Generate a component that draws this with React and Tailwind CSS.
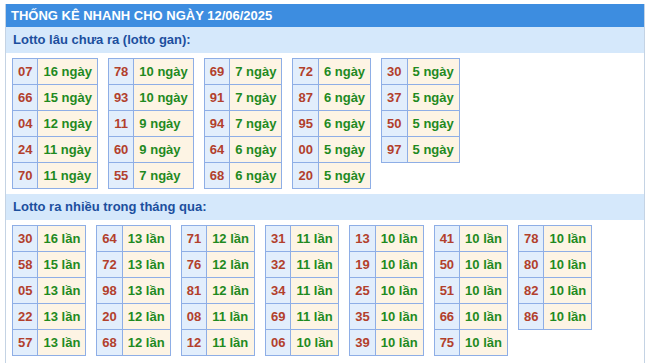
const gan = [
  [['07', '16 ngày'], ['66', '15 ngày'], ['04', '12 ngày'], ['24', '11 ngày'], ['70', '11 ngày']],
  [['78', '10 ngày'], ['93', '10 ngày'], ['11', '9 ngày'], ['60', '9 ngày'], ['55', '7 ngày']],
  [['69', '7 ngày'], ['91', '7 ngày'], ['94', '7 ngày'], ['64', '6 ngày'], ['68', '6 ngày']],
  [['72', '6 ngày'], ['87', '6 ngày'], ['95', '6 ngày'], ['00', '5 ngày'], ['20', '5 ngày']],
  [['30', '5 ngày'], ['37', '5 ngày'], ['50', '5 ngày'], ['97', '5 ngày']],
]

const nhieu = [
  [['30', '16 lần'], ['58', '15 lần'], ['05', '13 lần'], ['22', '13 lần'], ['57', '13 lần']],
  [['64', '13 lần'], ['72', '13 lần'], ['98', '13 lần'], ['20', '12 lần'], ['68', '12 lần']],
  [['71', '12 lần'], ['76', '12 lần'], ['81', '12 lần'], ['08', '11 lần'], ['12', '11 lần']],
  [['31', '11 lần'], ['32', '11 lần'], ['34', '11 lần'], ['69', '11 lần'], ['06', '10 lần']],
  [['13', '10 lần'], ['19', '10 lần'], ['25', '10 lần'], ['35', '10 lần'], ['39', '10 lần']],
  [['41', '10 lần'], ['50', '10 lần'], ['51', '10 lần'], ['66', '10 lần'], ['75', '10 lần']],
  [['78', '10 lần'], ['80', '10 lần'], ['82', '10 lần'], ['86', '10 lần']],
]

function LotoTable({ rows }) {
  return (
    <table className="border-collapse border border-[#8eaee6] self-start">
      <tbody>
        {rows.map(([so, val]) => (
          <tr key={so} className="h-[26px]">
            <td className="border border-[#8eaee6] bg-[#e2eefc] px-[5px] text-[#b2402c] font-bold text-center">{so}</td>
            <td className="border border-[#8eaee6] bg-[#fdf4e4] px-[5px] text-[#1f8a1f] font-bold whitespace-nowrap">{val}</td>
          </tr>
        ))}
      </tbody>
    </table>
  )
}

function Section({ title, tables }) {
  return (
    <>
      <div className="h-[26px] bg-[#d5e8fb] px-[7px] flex items-center text-[#1c4f9e] font-bold">
        {title}
      </div>
      <div className="flex gap-x-[10px] pl-[6px] pt-[5px] pb-[5px]">
        {tables.map((t, i) => (
          <LotoTable key={i} rows={t} />
        ))}
      </div>
    </>
  )
}

export default function App() {
  return (
    <div className="bg-white w-[655px] h-[363px] pt-[4px] pl-[5px] overflow-hidden"
      style={{ fontFamily: '"Liberation Sans", Arial, sans-serif' }}>
      <div className="w-[640px] border-x border-[#c4d3e4] min-h-[360px] text-[13px]">
        <div className="h-[23px] bg-[#3d8de0] text-white font-bold px-[5px] flex items-center">
          THỐNG KÊ NHANH CHO NGÀY 12/06/2025
        </div>
        <Section title="Lotto lâu chưa ra (lotto gan):" tables={gan} />
        <Section title="Lotto ra nhiều trong tháng qua:" tables={nhieu} />
      </div>
    </div>
  )
}
